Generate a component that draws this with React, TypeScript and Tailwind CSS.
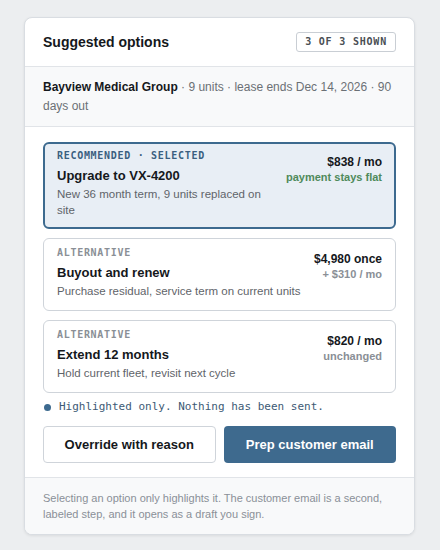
import React from "react";

const sans = { fontFamily: '"Liberation Sans", Arial, sans-serif' };
const mono = { fontFamily: '"DejaVu Sans Mono", "Liberation Mono", monospace' };

type Opt = {
  label: string;
  title: string;
  desc: string;
  price: string;
  sub: string;
  selected?: boolean;
};

const options: Opt[] = [
  {
    label: "RECOMMENDED · SELECTED",
    title: "Upgrade to VX-4200",
    desc: "New 36 month term, 9 units replaced on site",
    price: "$838 / mo",
    sub: "payment stays flat",
    selected: true,
  },
  {
    label: "ALTERNATIVE",
    title: "Buyout and renew",
    desc: "Purchase residual, service term on current units",
    price: "$4,980 once",
    sub: "+ $310 / mo",
  },
  {
    label: "ALTERNATIVE",
    title: "Extend 12 months",
    desc: "Hold current fleet, revisit next cycle",
    price: "$820 / mo",
    sub: "unchanged",
  },
];

function Option({ o }: { o: Opt }) {
  return (
    <div
      className={
        o.selected
          ? "flex items-start gap-3 rounded-[6px] border-2 border-[#3d6a8f] bg-[#e8eef5] px-[12px] pt-[5px] pb-[9px]"
          : "flex items-start gap-3 rounded-[6px] border border-[#cfd4da] bg-white px-[13px] pt-[7px] pb-[11px]"
      }
    >
      <div className="min-w-0 flex-1">
        <div
          style={mono}
          className={
            o.selected
              ? "text-[10px] font-bold leading-[14px] tracking-[0.07em] text-[#3a5f80]"
              : "text-[10px] font-bold leading-[14px] tracking-[0.07em] text-[#8a8f96]"
          }
        >
          {o.label}
        </div>
        <div className="mt-[3px] text-[13px] font-bold leading-[20px] text-[#15181c]">{o.title}</div>
        <div className="text-[11.5px] leading-[16px] text-[#5f646a]">{o.desc}</div>
      </div>
      <div className="shrink-0 pt-[5px] text-right">
        <div className="text-[12px] font-bold leading-[16px] text-[#15181c]">{o.price}</div>
        <div
          className={
            o.selected
              ? "text-[11px] font-bold leading-[14px] text-[#4f8a5b]"
              : "text-[11px] font-bold leading-[14px] text-[#8a8f96]"
          }
        >
          {o.sub}
        </div>
      </div>
    </div>
  );
}

export default function App() {
  return (
    <div style={sans} className="min-h-[550px] w-[440px] bg-[#eceef0] pt-[17px]">
      <div className="ml-[24px] w-[391px] overflow-hidden rounded-[8px] border border-[#d9dde2] bg-white shadow-[0_1px_3px_rgba(0,0,0,0.08)]">
        <div className="flex items-center justify-between border-b border-[#e1e4e8] px-[18px] py-[14px]">
          <div className="text-[14px] font-bold leading-[20px] text-[#15181c]">Suggested options</div>
          <div
            style={mono}
            className="rounded-[3px] border border-[#c9ced4] px-[8px] text-[10px] font-bold leading-[18px] tracking-[0.08em] text-[#4a4f55]"
          >
            3 OF 3 SHOWN
          </div>
        </div>
        <div className="border-b border-[#e1e4e8] bg-[#f8f9fa] px-[18px] pt-[11px] pb-[10px] text-[12px] leading-[19px] text-[#6b7075]">
          <span className="font-bold text-[#15181c]">Bayview Medical Group</span> · 9 units · lease ends Dec 14, 2026 · 90 days out
        </div>
        <div className="px-[18px] pt-[15px] pb-[14px]">
          <div className="flex flex-col gap-[9px]">
            {options.map((o) => (
              <Option key={o.title} o={o} />
            ))}
          </div>
          <div className="mt-[6px] flex items-center gap-[8px] pl-[1px]">
            <span className="h-[7px] w-[7px] rounded-full bg-[#3d6a8f]" />
            <span style={mono} className="text-[11px] leading-[16px] text-[#3d5a75]">
              Highlighted only. Nothing has been sent.
            </span>
          </div>
          <div className="mt-[11px] grid grid-cols-2 gap-[8px]">
            <button className="h-[37px] rounded-[4px] border border-[#cfd4da] bg-white text-[13px] font-bold text-[#15181c]">
              Override with reason
            </button>
            <button className="h-[37px] rounded-[4px] bg-[#3e6a8e] text-[13px] font-bold text-white">
              Prep customer email
            </button>
          </div>
        </div>
        <div className="border-t border-[#e1e4e8] bg-[#f8f9fa] px-[18px] py-[12px] text-[11px] leading-[16px] text-[#8a9098]">
          Selecting an option only highlights it. The customer email is a second, labeled step, and it opens as a draft you sign.
        </div>
      </div>
    </div>
  );
}
